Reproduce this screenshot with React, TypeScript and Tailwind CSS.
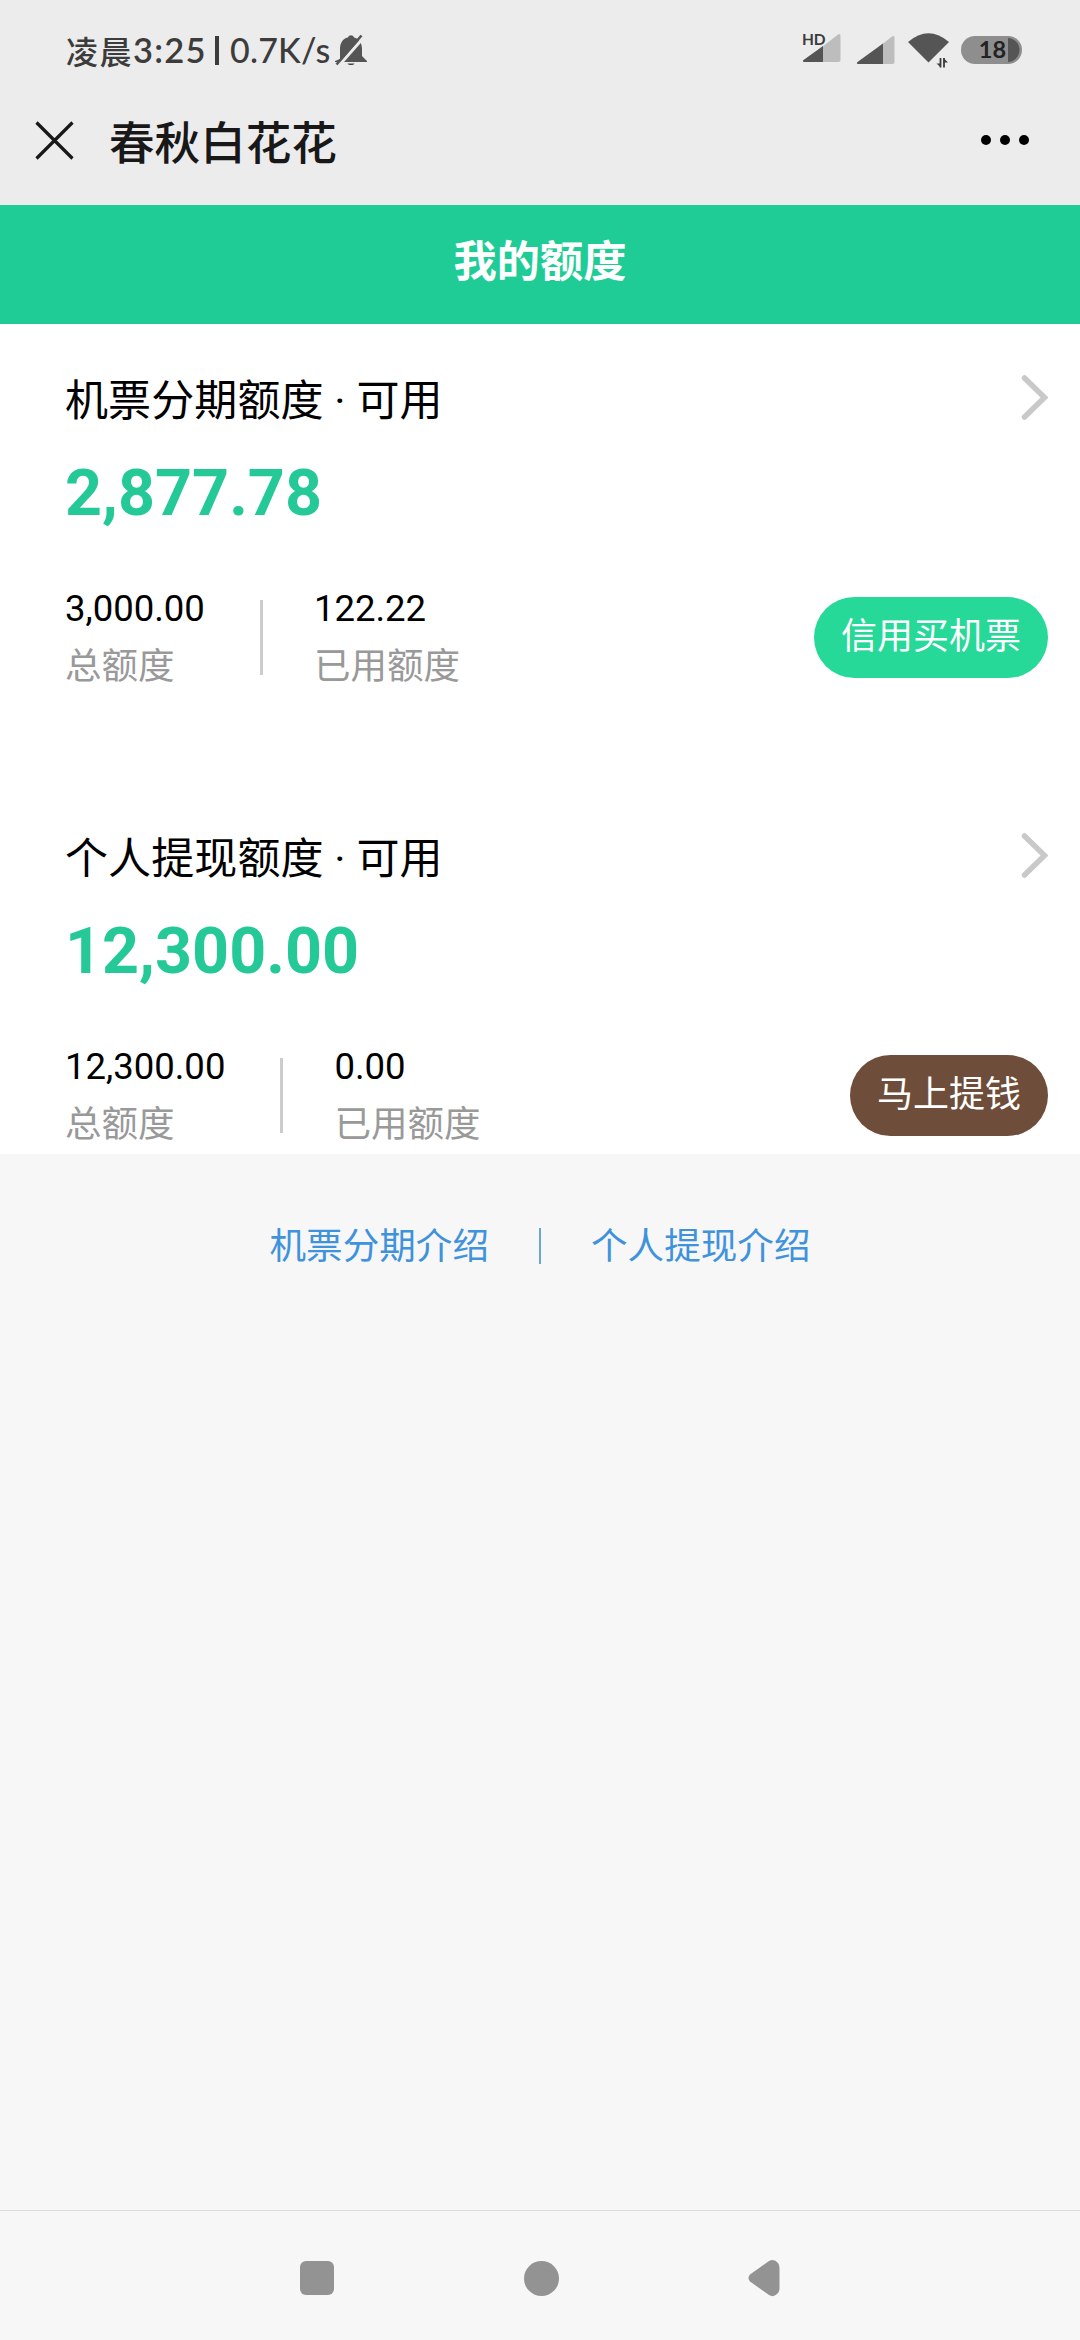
import React from "react";

function StatusBar() {
  return (
    <div className="flex h-[100px] items-center justify-between pl-[66px] pr-[58px] text-[#3c3c3c]">
      <div className="flex items-center">
        <span className="text-[32px] leading-[40px] tracking-[1.5px] font-medium font-['Noto_Sans_CJK_SC',sans-serif]">凌晨</span>
        <span className="w-[73px] whitespace-nowrap text-[34.500px] leading-[40px] tracking-[1.2px] font-semibold font-['Lato','Noto_Sans',sans-serif]">3:25</span>
        <span className="ml-[9px] h-[29px] w-[4px] bg-[#3c3c3c]" />
        <span className="ml-[11px] whitespace-nowrap text-[34px] leading-[40px] tracking-[0.2px] font-medium font-['Lato','Noto_Sans',sans-serif]">0.7K/s</span>
        <svg className="ml-[5px]" width="32" height="32" viewBox="0 0 32 32">
          <path d="M5 25V15C5 8 9 4 13 3.500C14 0.500 18 0.500 19 3.500C24 4.500 27 9 27 15V22L32 27V28H0V27Z" fill="#555" />
          <path d="M12.500 29.500H19.500C18.500 31.500 13.500 31.500 12.500 29.500Z" fill="#444" />
          <path d="M3.500 32L30 2" stroke="#ececec" strokeWidth="3" />
          <path d="M1.500 30.500L26.500 1.500" stroke="#555" strokeWidth="2.600" />
        </svg>
      </div>
      <svg width="220" height="40" viewBox="802 30 220 40">
        <path d="M803 62L838 34.500Q840.500 33 840.500 36V60Q840.500 62 838.500 62Z" fill="#bdbdbd" />
        <path d="M823 46V62H804Q802 61.500 803.500 60Z" fill="#555" />
        <text x="802" y="45.300" fontSize="15.500" fontWeight="700" fill="#3c3c3c" fontFamily="Lato, sans-serif" textLength="23.500">HD</text>
        <path d="M857 64L892 36.500Q894.500 35 894.500 38V62Q894.500 64 892.500 64Z" fill="#bdbdbd" />
        <path d="M883 43.500V64H858Q856 63.500 857.500 62Z" fill="#555" />
        <path d="M908 42Q928.500 24.500 949 42L928.500 62.500Z" fill="#555" />
        <path d="M940.500 58V67.500M944 67.500V58" stroke="#3c3c3c" strokeWidth="1.800" />
        <path d="M936.500 63.500H941V67.500ZM948 62.500H943.500V58Z" fill="#3c3c3c" />
        <clipPath id="battery"><rect x="963" y="38" width="56.500" height="24" rx="12" /></clipPath>
        <rect x="961" y="36" width="61" height="28" rx="14" fill="#8e8e8e" />
        <rect x="1008" y="38" width="12" height="24" fill="#555" clipPath="url(#battery)" />
        <text x="992.500" y="58.300" textAnchor="middle" fontSize="23.500" fontWeight="700" fill="#222" fontFamily="Lato, sans-serif">18</text>
      </svg>
    </div>
  );
}

function TitleBar() {
  return (
    <div className="flex h-[105px] items-start pl-[35px] pr-[51px]">
      <svg className="mt-[21px]" width="39" height="39" viewBox="0 0 39 39">
        <path d="M1.500 1.500L37.500 37.500M37.500 1.500L1.500 37.500" stroke="#181818" strokeWidth="3.200" />
      </svg>
      <h1 className="ml-[35px] mt-[10px] text-[45.600px] leading-[60px] font-medium text-[#181818] font-['Noto_Sans_CJK_SC',sans-serif]">春秋白花花</h1>
      <div className="ml-auto mt-[35px] flex gap-[9px]">
        <span className="size-[10px] rounded-full bg-black" />
        <span className="size-[10px] rounded-full bg-black" />
        <span className="size-[10px] rounded-full bg-black" />
      </div>
    </div>
  );
}

interface QuotaProps {
  title: string;
  available: string;
  total: string;
  used: string;
  action: string;
  actionClass: string;
}

function QuotaCard({ title, available, total, used, action, actionClass }: QuotaProps) {
  return (
    <section className="h-[458px] pl-[65px] pr-[32px] pt-[47px]">
      <div className="flex justify-between">
        <h3 className="text-[43px] leading-[60px] tracking-[0.1px] whitespace-nowrap">{title}</h3>
        <svg className="mt-[3px]" width="27" height="46" viewBox="0 0 27 46">
          <path d="M3.500 4L23.500 23.500L3.500 43" fill="none" stroke="#c9c9c9" strokeWidth="5.500" strokeLinecap="round" />
        </svg>
      </div>
      <div className="mt-[24px] text-[64.600px] leading-[76px] font-bold text-[#25c997]">{available}</div>
      <div className="mt-[55px] flex items-start text-[36.500px]">
        <div>
          <div className="leading-[46px]">{total}</div>
          <div className="mt-[10px] leading-[50px] text-[#999]">总额度</div>
        </div>
        <div className="ml-[55px] mt-[14px] h-[75px] w-[3px] bg-[#ccc]" />
        <div className="ml-[51px]">
          <div className="leading-[46px]">{used}</div>
          <div className="mt-[10px] leading-[50px] text-[#999]">已用额度</div>
        </div>
        <button className={`ml-auto mt-[11px] h-[81px] rounded-full px-[27px] text-[36px] leading-[81px] text-white whitespace-nowrap ${actionClass}`}>{action}</button>
      </div>
    </section>
  );
}

export default function App() {
  return (
    <div className="flex h-[2340px] w-[1080px] flex-col bg-[#f7f7f7] text-black font-['Roboto','Noto_Sans_CJK_SC',sans-serif]">
      <header className="h-[205px] bg-[#ececec]">
        <StatusBar />
        <TitleBar />
      </header>
      <h2 className="h-[119px] bg-[#1fcc96] pt-[28px] text-center text-[43.200px] leading-[60px] font-bold text-white">我的额度</h2>
      <main className="h-[830px] overflow-hidden bg-white">
        <QuotaCard title="机票分期额度 · 可用" available="2,877.78" total="3,000.00" used="122.22" action="信用买机票" actionClass="bg-[#26d998]" />
        <QuotaCard title="个人提现额度 · 可用" available="12,300.00" total="12,300.00" used="0.00" action="马上提钱" actionClass="bg-[#6e4e3a]" />
      </main>
      <div className="mt-[66px] flex items-center justify-center text-[36.600px] leading-[50px] text-[#3f92dc]">
        <a className="pt-[2px]">机票分期介绍</a>
        <span className="mx-[50px] h-[36px] w-[2px] bg-[#6ba6d2]" />
        <a className="pt-[2px]">个人提现介绍</a>
      </div>
      <nav className="mt-auto flex h-[130px] items-center justify-between border-t border-[#dcdcdc] pl-[300px] pr-[300px]">
        <span className="mt-[5px] size-[34px] rounded-[6px] bg-[#939393]" />
        <span className="mt-[5px] size-[35px] rounded-full bg-[#939393]" />
        <svg className="mt-[5px]" width="32" height="38" viewBox="0 0 32 38">
          <path d="M2 15.500L21 2Q26 -1 30 4Q31.500 6 31.500 9V29Q31.500 32 30 34Q26 39 21 36L2 22.500Q-1 19 2 15.500Z" fill="#939393" />
        </svg>
      </nav>
    </div>
  );
}
